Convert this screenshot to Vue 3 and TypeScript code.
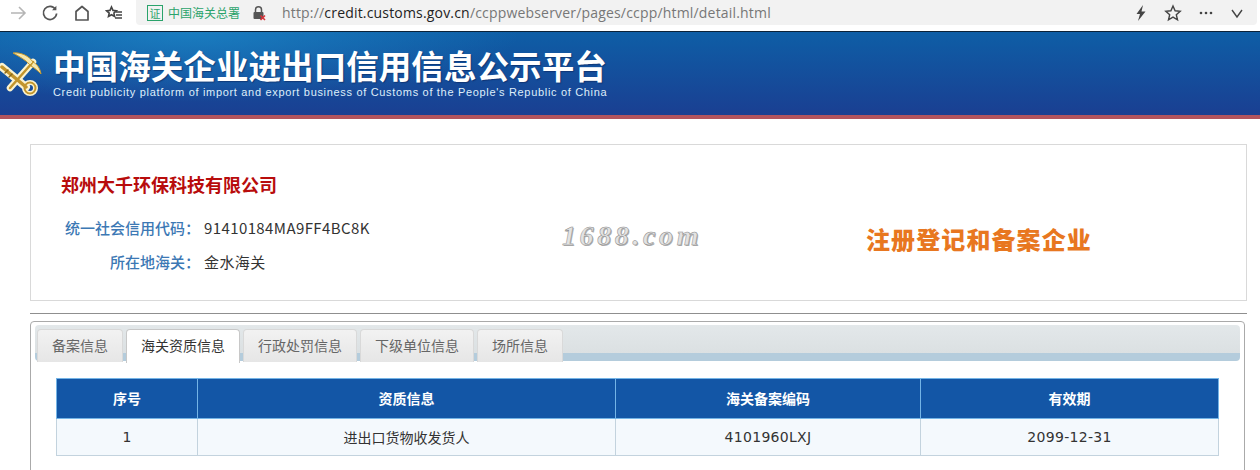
<template>
  <div class="page">
    <!-- 浏览器工具栏 -->
    <div class="browser-bar">
      <div class="nav-icons">
        <svg width="18" height="18" viewBox="0 0 18 18" fill="none" stroke="#b5b5b5" stroke-width="1.6">
          <path d="M2 9h14M10 3l6 6-6 6" />
        </svg>
        <svg width="18" height="18" viewBox="0 0 18 18" fill="none" stroke="#555" stroke-width="1.7">
          <path d="M14.5 5.2A6.600 6.600 0 1 0 15.600 9.500" />
          <path d="M15.400 1.800v4.400H11" fill="#555" stroke="none" />
        </svg>
        <svg width="18" height="18" viewBox="0 0 18 18" fill="none" stroke="#555" stroke-width="1.7">
          <path d="M3 16V7.500L9 2.500l6 5V16z" stroke-linejoin="round" />
        </svg>
        <svg width="18" height="18" viewBox="0 0 18 18" fill="#444" stroke="#444" stroke-width="1">
          <path d="M6.500 3l1.500 3.400 3.400.4-2.500 2.300.7 3.400-3.100-1.800-3 1.800.7-3.400L1.600 6.800 5 6.400z" fill="none" stroke-width="1.600" />
          <path d="M11 8h6M11 11h6M10 14h7" stroke-width="1.400" />
        </svg>
      </div>
      <div class="address">
        <span class="cert-badge">证</span>
        <span class="cert-name">中国海关总署</span>
        <svg class="lock" width="16" height="16" viewBox="0 0 16 16">
          <path d="M4.500 7V4.800a3 3 0 0 1 6 0V7" fill="none" stroke="#555" stroke-width="1.500" />
          <rect x="2.500" y="7" width="10" height="7" rx="1" fill="#555" />
          <path d="M9.500 10.500l4.500 4.500M14 10.500L9.500 15" stroke="#d8343a" stroke-width="1.600" />
        </svg>
        <span class="url"><i>http://</i>credit.customs.gov.cn<i>/ccppwebserver/pages/ccpp/html/detail.html</i></span>
        <div class="addr-tools">
          <svg width="14" height="18" viewBox="0 0 14 18"><path d="M9 1L2.500 10H6l-2 7 7.500-9.500H7.500z" fill="#444" /></svg>
          <svg width="18" height="18" viewBox="0 0 18 18" fill="none" stroke="#444" stroke-width="1.400">
            <path d="M9 2l2.100 4.800 5.100.5-3.900 3.400 1.200 5.100L9 13.100l-4.500 2.700 1.200-5.100-3.900-3.400 5.100-.5z" />
          </svg>
          <svg width="16" height="14" viewBox="0 0 16 14" fill="#444">
            <circle cx="3" cy="7" r="1.300" /><circle cx="8" cy="7" r="1.300" /><circle cx="13" cy="7" r="1.300" />
          </svg>
          <svg width="14" height="14" viewBox="0 0 14 14" fill="none" stroke="#444" stroke-width="1.400"><path d="M2 4l5 7 5-7" /></svg>
        </div>
      </div>
    </div>

    <!-- 站点头部 -->
    <header class="site-header">
      <svg class="emblem" width="42" height="46" viewBox="0 0 42 46">
        <g fill="none" stroke="#fbf3cf" stroke-linecap="round">
          <path d="M2 16l24 20" stroke-width="8" />
          <path d="M33 11L10 37" stroke-width="6.500" />
          <circle cx="30" cy="37" r="5.500" stroke-width="5" />
        </g>
        <g fill="none" stroke="#c2952c" stroke-linecap="round">
          <path d="M2 16l24 20" stroke-width="3.500" />
          <path d="M33 11L10 37" stroke-width="2.500" />
          <circle cx="30" cy="37" r="5.500" stroke-width="2" />
          <path d="M5 22l3-3M9 26l3-3" stroke="#8a6a1c" stroke-width="1.500" />
        </g>
        <path d="M13 2c8-1 16 3 20 9l-3 3C26 9 20 6 13 2z" fill="#f6e7ad" stroke="#c79a2e" />
        <path d="M33 11c4 2 7 6 8 12-3-3-6-6-10-8z" fill="#f6e7ad" stroke="#c79a2e" />
      </svg>
      <div class="header-text">
        <h1>中国海关企业进出口信用信息公示平台</h1>
        <p>Credit publicity platform of import and export business of Customs of the People's Republic of China</p>
      </div>
    </header>

    <main class="content">
      <!-- 企业信息 -->
      <section class="company-card">
        <div class="company-info">
          <h2>郑州大千环保科技有限公司</h2>
          <div v-for="row in companyRows" :key="row.label" class="info-row">
            <span class="info-label">{{ row.label }}</span>
            <span class="info-value">{{ row.value }}</span>
          </div>
        </div>
        <span class="watermark">1688.com</span>
        <span class="company-status">注册登记和备案企业</span>
      </section>

      <hr class="divider" />

      <!-- 标签页 -->
      <section class="tab-panel">
        <div class="tab-strip">
          <div
            v-for="tab in tabs"
            :key="tab"
            class="tab"
            :class="{ active: tab === activeTab }"
          >
            {{ tab }}
          </div>
        </div>
        <div class="table-wrap">
          <table>
            <colgroup>
              <col class="col-no" />
              <col class="col-info" />
              <col class="col-code" />
              <col />
            </colgroup>
            <thead>
              <tr>
                <th v-for="h in headers" :key="h">{{ h }}</th>
              </tr>
            </thead>
            <tbody>
              <tr>
                <td class="num">1</td>
                <td>进出口货物收发货人</td>
                <td class="num">4101960LXJ</td>
                <td class="num">2099-12-31</td>
              </tr>
            </tbody>
          </table>
        </div>
      </section>
    </main>
  </div>
</template>

<script setup lang="ts">
const companyRows = [
  { label: '统一社会信用代码：', value: '91410184MA9FF4BC8K' },
  { label: '所在地海关：', value: '金水海关' },
]

const tabs = ['备案信息', '海关资质信息', '行政处罚信息', '下级单位信息', '场所信息']
const activeTab = '海关资质信息'

const headers = ['序号', '资质信息', '海关备案编码', '有效期']
</script>

<style>
html,
body {
  margin: 0;
  background: #fff;
  overflow: hidden;
}
</style>

<style scoped>
.page {
  width: 1260px;
  height: 470px;
  overflow: hidden;
  font-family: "Noto Sans CJK SC", "DejaVu Sans", sans-serif;
  color: #333;
}

/* 浏览器工具栏 */
.browser-bar {
  display: flex;
  height: 32px;
  box-sizing: border-box;
  border-bottom: 1px solid #0b2238;
  background: #fff;
}

.nav-icons {
  display: flex;
  align-items: center;
  gap: 14px;
  width: 136px;
  padding: 0 0 6px 9px;
  box-sizing: border-box;
}

.address {
  flex: 1;
  display: flex;
  align-items: center;
  height: 25px;
  margin-right: 3px;
  padding-left: 11px;
  background: #f2f2f2;
  border-radius: 0 0 4px 4px;
}

.cert-badge {
  width: 14px;
  height: 14px;
  border: 1px solid #2aa36b;
  color: #2aa36b;
  font-size: 11px;
  line-height: 14px;
  text-align: center;
}

.cert-name {
  margin-left: 5px;
  color: #2aa36b;
  font-size: 12px;
}

.lock {
  margin-left: 11px;
}

.url {
  margin-left: 15px;
  font-family: "Open Sans", "Noto Sans", sans-serif;
  font-size: 14px;
  letter-spacing: 0.18px;
  color: #222;
}

.url i {
  font-style: normal;
  color: #777;
}

.addr-tools {
  display: flex;
  align-items: center;
  gap: 16px;
  margin-left: auto;
  padding-right: 13px;
}

/* 站点头部 */
.site-header {
  display: flex;
  align-items: center;
  height: 83px;
  border-bottom: 4px solid #b2545e;
  background:
    radial-gradient(ellipse 330px 70px at 190px 0, rgba(30, 135, 200, 0.75), rgba(30, 135, 200, 0)),
    linear-gradient(180deg, #0e5ea6 0%, #1a3f92 100%);
}

.emblem {
  flex: none;
}

.header-text {
  margin-left: 11px;
  color: #fff;
}

.header-text h1 {
  margin: 0;
  font-family: "Liberation Sans", "Noto Sans CJK SC", sans-serif;
  font-size: 32.6px;
  line-height: 37px;
  font-weight: 700;
  white-space: nowrap;
  text-shadow: 1px 1px 1px rgba(10, 30, 80, 0.5);
}

.header-text p {
  margin: 0;
  font-family: "Liberation Sans", sans-serif;
  font-size: 11px;
  line-height: 13px;
  letter-spacing: 0.68px;
  color: #dfeefa;
  white-space: nowrap;
}

/* 内容区 */
.content {
  padding: 25px 13px 0 30px;
}

.company-card {
  position: relative;
  height: 157px;
  box-sizing: border-box;
  border: 1px solid #d9d9d9;
  padding: 26px 0 0 30px;
}

.company-info h2 {
  margin: 0 0 13px;
  color: #b80c0c;
  font-size: 18px;
  line-height: 26px;
  font-weight: 700;
}

.info-row {
  display: flex;
  align-items: center;
  gap: 4px;
  height: 34px;
}

.info-label {
  width: 139px;
  color: #3c78b4;
  font-size: 15px;
  font-weight: 500;
  text-align: right;
  white-space: nowrap;
}

.info-value {
  color: #333;
  font-size: 15px;
  letter-spacing: 0.4px;
}

/* 盖在卡片上的水印与状态图 */
.watermark {
  position: absolute;
  left: 531px;
  top: 75px;
  font-family: "Liberation Serif", serif;
  font-style: italic;
  font-weight: 700;
  font-size: 28px;
  letter-spacing: 3.6px;
  color: #e2e2e2;
  -webkit-text-stroke: 0.5px #8a8a8a;
  text-shadow: 1px 1px 0 #b0b0b0;
}

.company-status {
  position: absolute;
  left: 835px;
  top: 78px;
  color: #e87720;
  font-size: 24px;
  line-height: 32px;
  font-weight: 900;
  letter-spacing: 1.1px;
  white-space: nowrap;
}

.divider {
  height: 1px;
  margin: 12px 0 7px;
  border: 0;
  background: #8f8f8f;
}

/* 标签页 */
.tab-panel {
  width: 1215px;
  height: 170px;
  box-sizing: border-box;
  padding: 3px 4px 0;
  border: 1px solid #aaa;
  border-radius: 4px;
}

.tab-strip {
  display: flex;
  gap: 3px;
  height: 36px;
  box-sizing: border-box;
  padding: 4px 0 0 2px;
  border-radius: 4px;
  background: linear-gradient(180deg, #e3e8ea 0%, #dbe0e2 78%, #b4ccdc 78%, #b4ccdc 100%);
}

.tab {
  width: 86px;
  height: 33px;
  box-sizing: border-box;
  border: 1px solid #d9d9d9;
  border-bottom: 0;
  border-radius: 4px 4px 0 0;
  background: linear-gradient(180deg, #f2f2f2 0%, #e6e6e6 100%);
  color: #666;
  font-size: 14px;
  line-height: 30px;
  text-align: center;
  white-space: nowrap;
}

.tab:nth-child(n + 2) {
  width: 114px;
}

.tab:last-child {
  width: 86px;
}

.tab.active {
  height: 34px;
  background: #fff;
  border-color: #c8c8c8;
  color: #333;
}

.table-wrap {
  padding: 17px 20px 0 21px;
}

table {
  width: 1163px;
  border-collapse: collapse;
  table-layout: fixed;
  font-size: 14px;
}

.col-no {
  width: 141px;
}

.col-info {
  width: 418px;
}

.col-code {
  width: 305px;
}

th {
  height: 40px;
  padding: 0 0 2px;
  box-sizing: border-box;
  border: 1px solid #74b4e6;
  background: #1356a6;
  color: #fff;
  font-weight: 700;
}

td {
  height: 36px;
  padding: 0;
  border: 1px solid #c3d3de;
  background: #f4f9fd;
  color: #333;
  text-align: center;
}

td.num {
  font-family: "DejaVu Sans", sans-serif;
  letter-spacing: 0.3px;
}
</style>
